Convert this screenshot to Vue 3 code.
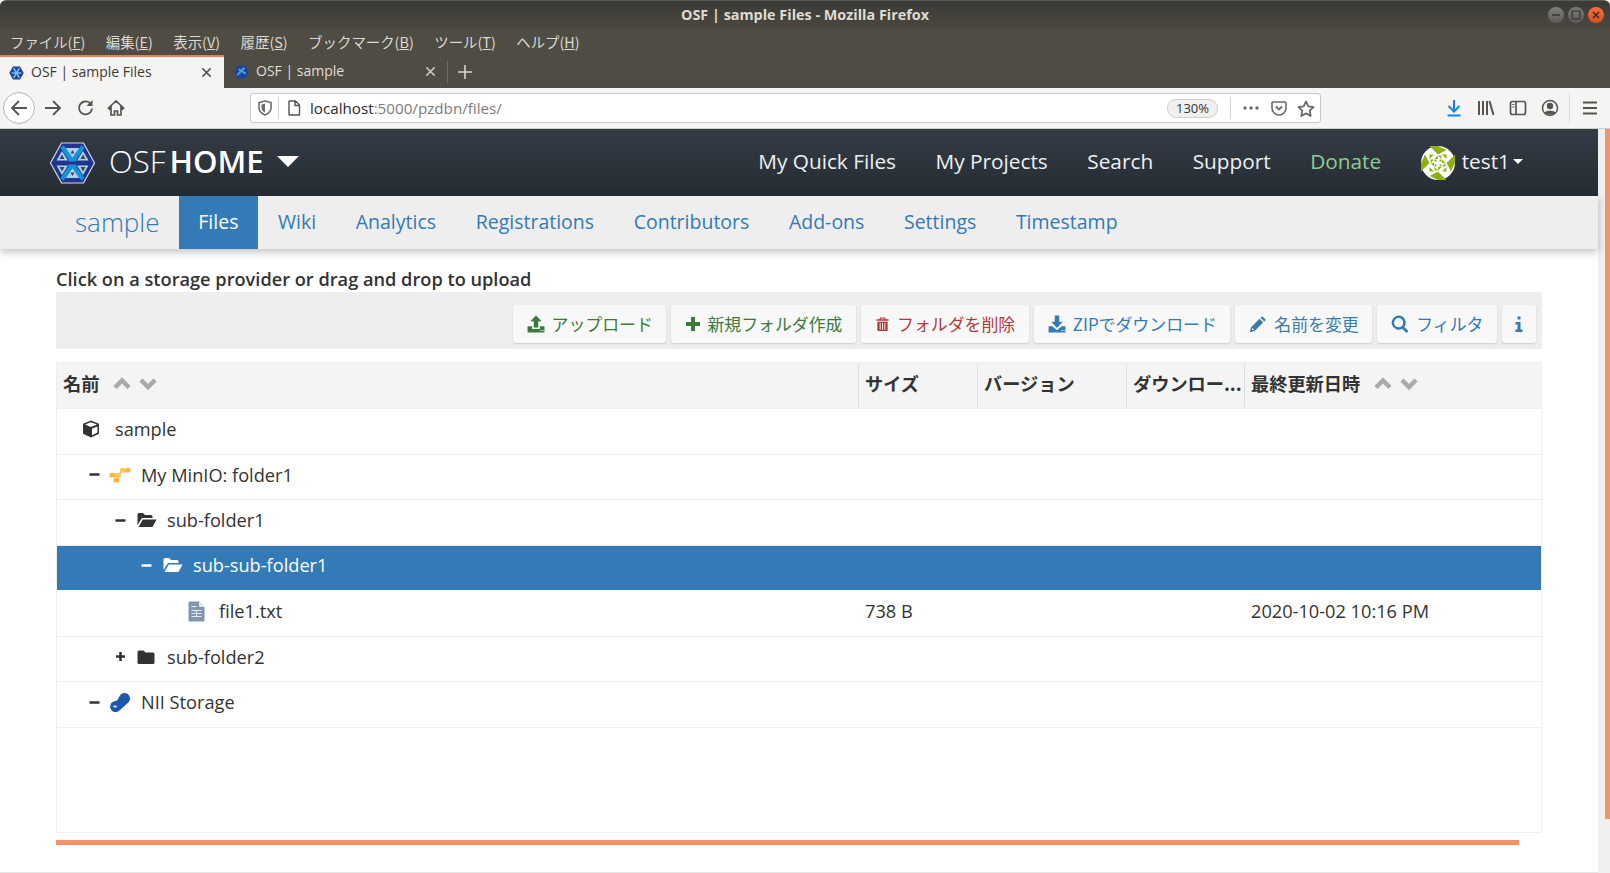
<template>
  <div class="window">
    <div class="titlebar">
      <span class="title">OSF | sample Files - Mozilla Firefox</span>
      <div class="win-buttons">
        <span class="win-btn">
          <svg width="10" height="10" viewBox="0 0 10 10"><path d="M1 5h8" stroke="#35342f" stroke-width="1.4" /></svg>
        </span>
        <span class="win-btn">
          <svg width="10" height="10" viewBox="0 0 10 10"><rect x="1" y="1" width="8" height="8" fill="none" stroke="#35342f" stroke-width="1.2" /></svg>
        </span>
        <span class="win-btn close">
          <svg width="10" height="10" viewBox="0 0 10 10"><path d="M2 2l6 6M8 2l-6 6" stroke="#3c2418" stroke-width="1.4" /></svg>
        </span>
      </div>
    </div>

    <div class="menubar">
      <span v-for="m in menus" :key="m.key" class="menu-item">{{ m.label }}(<u>{{ m.key }}</u>)</span>
    </div>

    <div class="tabbar">
      <div class="tab active">
        <svg class="favicon" viewBox="0 0 46 42"><path d="M12 1h22l11 20-11 20H12L1 21z" fill="#24409a" /><path d="M8 21h30M14 6l18 30M32 6L14 36" stroke="#6fc0ea" stroke-width="5" /></svg>
        <span class="tab-label">OSF | sample Files</span>
        <svg class="tab-close" viewBox="0 0 12 12"><path d="M1.5 1.5l9 9M10.5 1.5l-9 9" stroke="#55544f" stroke-width="1.6" /></svg>
      </div>
      <div class="tab second">
        <svg class="favicon" viewBox="0 0 46 42"><path d="M12 1h22l11 20-11 20H12L1 21z" fill="#24409a" /><path d="M10 30L32 8M14 12l22 14" stroke="#3aa3dd" stroke-width="6" /></svg>
        <span class="tab-label">OSF | sample</span>
        <svg class="tab-close" viewBox="0 0 12 12"><path d="M1.5 1.5l9 9M10.5 1.5l-9 9" stroke="#c9c6bd" stroke-width="1.6" /></svg>
      </div>
      <span class="tab-sep"></span>
      <svg class="tab-new" viewBox="0 0 14 14"><path d="M7 0v14M0 7h14" stroke="#d8d5cc" stroke-width="1.6" /></svg>
    </div>

    <div class="toolbar">
      <span class="back-btn">
        <svg width="18" height="18" viewBox="0 0 18 18"><path d="M2 9h15M9 2L2 9l7 7" fill="none" stroke="#55544f" stroke-width="1.8" /></svg>
      </span>
      <svg class="tool-icon forward" viewBox="0 0 18 18"><path d="M1 9h15M9 2l7 7-7 7" fill="none" stroke="#55544f" stroke-width="1.8" /></svg>
      <svg class="tool-icon reload" viewBox="0 0 18 18"><path d="M15 9.5A6.5 6.5 0 1 1 12.8 4" fill="none" stroke="#55544f" stroke-width="1.8" /><path d="M15.5 1v6h-6z" fill="#55544f" /></svg>
      <svg class="tool-icon home" viewBox="0 0 18 18"><path d="M9 2L1.5 9l1 1L4 8.8V16h3.5v-4h3v4H14V8.8l1.5 1.2 1-1z" fill="none" stroke="#55544f" stroke-width="1.7" /></svg>

      <div class="urlbar">
        <svg class="url-shield" viewBox="0 0 14 16"><path d="M7 1l6 1.6V8c0 3.4-2.6 5.6-6 7-3.4-1.4-6-3.6-6-7V2.6z" fill="none" stroke="#6c6b66" stroke-width="1.6" /><path d="M7 3.5V12.5C5 11.500 3.500 10 3.500 8V4.500z" fill="#6c6b66" /></svg>
        <span class="url-sep"></span>
        <svg class="url-page" viewBox="0 0 14 16"><path d="M2.500 1h6L12.500 5v9.500a.5.5 0 0 1-.5.5H2.500a.5.5 0 0 1-.5-.5v-13A.5.5 0 0 1 2.500 1zM8 1v4.500h4.500" fill="none" stroke="#55544f" stroke-width="1.4" /></svg>
        <span class="url-text">localhost<span class="url-dim">:5000/pzdbn/files/</span></span>
        <span class="zoom-pill">130%</span>
        <span class="url-sep wide"></span>
        <svg class="url-act dots" viewBox="0 0 16 4"><circle cx="2" cy="2" r="1.700" /><circle cx="8" cy="2" r="1.700" /><circle cx="14" cy="2" r="1.700" /></svg>
        <svg class="url-act pocket" viewBox="0 0 16 15"><path d="M1.800 1h12.400a.8.8 0 0 1 .8.8V7a7 7 0 0 1-14 0V1.800A.8.8 0 0 1 1.800 1z" fill="none" stroke="#6c6b66" stroke-width="1.600" /><path d="M4.800 5.500L8 8.500l3.200-3" fill="none" stroke="#6c6b66" stroke-width="1.800" /></svg>
        <svg class="url-act star" viewBox="0 0 18 17"><path d="M9 1.500l2.300 4.900 5.300.7-3.900 3.600 1 5.300L9 13.400l-4.700 2.600 1-5.300L1.400 7.100l5.300-.7z" fill="none" stroke="#6c6b66" stroke-width="1.800" stroke-linejoin="round" /></svg>
      </div>

      <div class="tool-right">
        <svg class="tool-icon" viewBox="0 0 18 18"><path d="M9 1v11M3.500 7L9 12.500 14.500 7M2.500 16.500h13" fill="none" stroke="#0a84ff" stroke-width="2" /></svg>
        <svg class="tool-icon" viewBox="0 0 18 18"><path d="M2 2v14M6 2v14M10 2v14M12.500 2l4 14" fill="none" stroke="#55544f" stroke-width="2" /></svg>
        <svg class="tool-icon" viewBox="0 0 18 18"><rect x="1.500" y="2.500" width="15" height="13" rx="2" fill="none" stroke="#55544f" stroke-width="1.700" /><path d="M7 2.500v13" stroke="#55544f" stroke-width="1.700" /><path d="M3.300 5.500h2M3.300 8h2" stroke="#55544f" stroke-width="1.200" /></svg>
        <svg class="tool-icon" viewBox="0 0 18 18"><circle cx="9" cy="9" r="7.500" fill="none" stroke="#55544f" stroke-width="1.500" /><circle cx="9" cy="7" r="3.200" fill="#55544f" /><path d="M3.600 13.500C5 11 13 11 14.400 13.500 12 16.500 6 16.500 3.600 13.500z" fill="#55544f" /></svg>
        <span class="tool-sep"></span>
        <svg class="tool-icon" viewBox="0 0 18 18"><path d="M2 3.500h14M2 9h14M2 14.500h14" stroke="#55544f" stroke-width="2.200" /></svg>
      </div>
    </div>

    <div class="viewport">
      <div class="page">
        <nav class="navbar">
          <div class="brand">
            <svg class="logo" viewBox="0 0 46 42">
              <path d="M12 1h22l11 20-11 20H12L1 21z" fill="#22348f" stroke="#d3d9e4" stroke-width="1.200" />
              <g v-for="m in ['', 'matrix(1 0 0 -1 0 42)']" :key="m" :transform="m">
                <path d="M16 6h14L23 16zM12.500 9L18.500 18.500H7zM33.500 9L27.500 18.500H39z" fill="#a9d3ec" />
                <path d="M12.500 4.500L23 19.500 33.500 4.500M19 19h8" fill="none" stroke="#1593dc" stroke-width="4" />
                <path d="M12.500 12.500l2.500 4.500h-5zM33.500 12.500l2.500 4.500h-5zM23 8l2 3.500h-4z" fill="#3f444d" />
              </g>
              <path d="M3 21h40" stroke="#22348f" stroke-width="3" />
            </svg>
            <span class="brand-osf">OSF</span>
            <span class="brand-home">HOME</span>
            <span class="brand-caret"></span>
          </div>
          <div class="nav-links">
            <a v-for="l in navLinks" :key="l" class="nav-link">{{ l }}</a>
            <a class="nav-link donate">Donate</a>
            <div class="user">
              <svg class="avatar" viewBox="0 0 34 34">
                <circle cx="17" cy="17" r="17" fill="#fff" />
                <g v-for="r in [0, 90, 180, 270]" :key="r" :transform="`rotate(${r} 17 17)`" fill="#8fb012">
                  <path d="M17 0v8.500L8.500 0zM0 17h8.500L4 8.500zM8.500 8.500h4.500l-4.500 4.500zM17 9.500v3.500h-3.500zM9.500 17v-3.500h3.500zM13.500 13.500h2v2h-2z" />
                </g>
              </svg>
              <span class="user-name">test1</span>
              <span class="user-caret"></span>
            </div>
          </div>
        </nav>

        <div class="subnav">
          <a class="project">sample</a>
          <a v-for="t in subTabs" :key="t" class="sub-tab" :class="{ current: t === 'Files' }">{{ t }}</a>
        </div>

        <div class="content">
          <div class="hint">Click on a storage provider or drag and drop to upload</div>
          <div class="actions">
            <button v-for="b in actions" :key="b.label" class="action" :class="b.tone">
              <svg class="action-icon" :class="b.icon" viewBox="0 0 16 16"><path :d="icons[b.icon]" fill="currentColor" fill-rule="evenodd" /></svg>
              <span>{{ b.label }}</span>
            </button>
            <button class="action info-btn">
              <svg class="action-icon" viewBox="0 0 8 16"><path d="M2.500 0.500h3v3h-3zM0.500 6h5v7.500h2V16h-7v-2.500h2V8.500h-2z" fill="currentColor" /></svg>
            </button>
          </div>

          <div class="grid">
            <div class="grid-head">
              <div class="col col-name">名前
                <svg class="sort" viewBox="0 0 44 16"><path d="M2 12.500l7-7 7 7M28 5l7 7 7-7" fill="none" stroke="#aaa" stroke-width="4.500" /></svg>
              </div>
              <div class="col col-size">サイズ</div>
              <div class="col col-ver">バージョン</div>
              <div class="col col-dl">ダウンロー...</div>
              <div class="col col-date">最終更新日時
                <svg class="sort" viewBox="0 0 44 16"><path d="M2 12.500l7-7 7 7M28 5l7 7 7-7" fill="none" stroke="#aaa" stroke-width="4.500" /></svg>
              </div>
            </div>

            <div v-for="row in rows" :key="row.name" class="row" :class="{ selected: row.selected }">
              <div class="cell-name" :style="{ paddingLeft: row.level * 26 + 'px' }">
                <span class="toggle">
                  <svg v-if="row.toggle" viewBox="0 0 11 11"><path :d="row.toggle === '+' ? 'M5.500 1v9M1 5.500h9' : 'M0.500 5.500h10'" stroke="currentColor" stroke-width="2.500" /></svg>
                </span>
                <span class="row-icon">
                  <svg v-if="row.icon === 'cube'" class="i-cube" viewBox="0 0 18 18">
                    <path d="M9 0.500l8 3.200v10L9 17.500l-8-3.800v-10z" fill="#333" />
                    <path d="M3 4.500L9 7l6-2.500L9 2.300zM10 8.700l5.500-2.300v6.200L10 15.200z" fill="#fff" />
                  </svg>
                  <svg v-else-if="row.icon === 'minio'" class="i-minio" viewBox="0 0 22 16">
                    <path d="M3 8h7M10 7l4-4h5M8 9l-1 4" stroke="#f7b93e" stroke-width="1.200" fill="none" />
                    <rect x="0.500" y="6" width="6" height="4.500" rx="1.500" fill="#f7b93e" />
                    <rect x="6" y="6" width="6" height="4.500" rx="1.500" fill="#fbc85f" />
                    <rect x="11" y="1" width="5.500" height="4.500" rx="1.500" fill="#fbc85f" />
                    <rect x="16" y="1" width="5.500" height="4.500" rx="1.500" fill="#f7b93e" />
                    <rect x="4.500" y="11" width="6" height="4.500" rx="1.500" fill="#f7b93e" />
                  </svg>
                  <svg v-else-if="row.icon === 'open'" class="i-folder" viewBox="0 0 20 16"><path d="M0.500 13V2.500A1.500 1.500 0 0 1 2 1h4l2 2h6a1.500 1.500 0 0 1 1.500 1.500V6H5L0.500 13zM5.800 7.500H19.500L15.500 15H1.500z" fill="currentColor" /></svg>
                  <svg v-else-if="row.icon === 'folder'" class="i-closed" viewBox="0 0 18 16"><path d="M0.500 3a1.500 1.500 0 0 1 1.500-1.500h4.500l2 2H16A1.500 1.500 0 0 1 17.500 5v8.500A1.500 1.500 0 0 1 16 15H2A1.500 1.500 0 0 1 0.500 13.500z" fill="currentColor" /></svg>
                  <svg v-else-if="row.icon === 'file'" class="i-file" viewBox="0 0 17 21">
                    <path d="M1.500 0.500H11L16.500 6v13.500a1 1 0 0 1-1 1h-14a1 1 0 0 1-1-1v-18a1 1 0 0 1 1-1z" fill="#8197ad" />
                    <path d="M11 0.500V6h5.500z" fill="#dfe5eb" />
                    <path d="M3.500 5h5v1h-5zM3.500 9h10v1h-10zM3.500 12h10v1h-10zM3.500 15h10v1h-10zM8 9h1v7H8z" fill="#e6ebf0" />
                  </svg>
                  <svg v-else-if="row.icon === 'nii'" class="i-nii" viewBox="0 0 22 20">
                    <path d="M15.500 1a5.500 5.500 0 0 1 3.500 9.700L11 18a5.500 5.500 0 1 1-7-8.200c2.500-1 3.500-.5 5-2.500 1.800-3.500 3-6.300 6.500-6.300z" fill="#1f57ab" />
                    <ellipse cx="6" cy="14.500" rx="2.200" ry="1" fill="#cfe0f3" />
                  </svg>
                </span>
                <span class="row-name">{{ row.name }}</span>
              </div>
              <div class="cell-size">{{ row.size }}</div>
              <div class="cell-ver"></div>
              <div class="cell-dl"></div>
              <div class="cell-date">{{ row.date }}</div>
            </div>
          </div>
          <div class="progress"></div>
        </div>
      </div>
      <div class="scrollbar"><div class="thumb"></div></div>
    </div>
  </div>
</template>

<script setup>
const menus = [
  { label: 'ファイル', key: 'F' },
  { label: '編集', key: 'E' },
  { label: '表示', key: 'V' },
  { label: '履歴', key: 'S' },
  { label: 'ブックマーク', key: 'B' },
  { label: 'ツール', key: 'T' },
  { label: 'ヘルプ', key: 'H' }
]

const navLinks = ['My Quick Files', 'My Projects', 'Search', 'Support']
const subTabs = ['Files', 'Wiki', 'Analytics', 'Registrations', 'Contributors', 'Add-ons', 'Settings', 'Timestamp']

const icons = {
  upload: 'M8 0.500L13 5.500H10V11H6V5.500H3zM0.500 10H4.500V12.500H11.500V10H15.500V15.500H0.500zM12 13.300h1v1h-1zM13.800 13.300h1v1h-1z',
  plus: 'M6 1H10V6H15V10H10V15H6V10H1V6H6z',
  trash: 'M5.500 1H10.500L11.500 3H14.500V4.500H1.500V3H4.500zM6.500 2.200L6 3H10L9.500 2.200zM2.500 5.500H13.500V14.500A1 1 0 0 1 12.500 15.500H3.500A1 1 0 0 1 2.500 14.500zM5 7V14H6V7zM7.500 7V14H8.500V7zM10 7V14H11V7z',
  download: 'M6 0.500H10V6H13L8 11.500L3 6H6zM0.500 10H3.800L8 13.500L12.200 10H15.500V15.500H0.500zM12 13.300h1v1h-1zM13.800 13.300h1v1h-1z',
  pencil: 'M11.700 1L15 4.300L13.500 5.800L10.200 2.500zM9.300 3.400L12.600 6.700L5 14.300L0.700 15.300L1.700 11zM3 11.500L4.500 13L3 13.500L2.500 13z',
  search: 'M6.800 0.500A6.300 6.300 0 0 1 11.800 10.600L15.500 14.300L13.700 16L10 12.300A6.300 6.300 0 1 1 6.800 0.500zM6.800 2.700A4.100 4.100 0 1 0 6.800 10.900A4.100 4.100 0 0 0 6.800 2.700z'
}

const actions = [
  { label: 'アップロード', icon: 'upload', tone: 'green' },
  { label: '新規フォルダ作成', icon: 'plus', tone: 'green' },
  { label: 'フォルダを削除', icon: 'trash', tone: 'red' },
  { label: 'ZIPでダウンロード', icon: 'download', tone: 'blue' },
  { label: '名前を変更', icon: 'pencil', tone: 'teal' },
  { label: 'フィルタ', icon: 'search', tone: 'blue' }
]

const rows = [
  { level: 0, icon: 'cube', name: 'sample' },
  { level: 1, toggle: '-', icon: 'minio', name: 'My MinIO: folder1' },
  { level: 2, toggle: '-', icon: 'open', name: 'sub-folder1' },
  { level: 3, toggle: '-', icon: 'open', name: 'sub-sub-folder1', selected: true },
  { level: 4, icon: 'file', name: 'file1.txt', size: '738 B', date: '2020-10-02 10:16 PM' },
  { level: 2, toggle: '+', icon: 'folder', name: 'sub-folder2' },
  { level: 1, toggle: '-', icon: 'nii', name: 'NII Storage' }
]
</script>

<style>
html, body {
  margin: 0;
  overflow: hidden;
  background: #fff;
}
</style>

<style scoped>
.window {
  height: 873px;
  display: flex;
  flex-direction: column;
  overflow: hidden;
  font-family: "Open Sans", "Noto Sans CJK JP", sans-serif;
  color: #333;
}

/* firefox chrome */
.titlebar {
  height: 30px;
  flex: none;
  display: flex;
  align-items: center;
  justify-content: center;
  position: relative;
  background: linear-gradient(#3b3a36, #4a4840);
  border-top: 1px solid #5b5a52;
  box-sizing: border-box;
  border-radius: 6px 6px 0 0;
  padding-bottom: 2px;
}
.title {
  font-size: 14.400px;
  font-weight: 700;
  color: #dfdbd2;
  font-family: "Open Sans", sans-serif;
}
.win-buttons {
  position: absolute;
  right: 6px;
  top: 6px;
  display: flex;
  gap: 4px;
}
.win-btn {
  width: 16px;
  height: 16px;
  border-radius: 50%;
  background: linear-gradient(#807e78, #5d5b55);
  display: flex;
  align-items: center;
  justify-content: center;
}
.win-btn.close {
  background: linear-gradient(#f0703f, #d9501e);
}
.menubar {
  height: 25px;
  flex: none;
  box-sizing: border-box;
  background: #4f4c44;
  display: flex;
  align-items: center;
  gap: 20.500px;
  padding: 0 0 3px 10px;
  font-family: "Noto Sans CJK JP", sans-serif;
  font-size: 14.400px;
  font-weight: 400;
  color: #dcd9d0;
}
.tabbar {
  height: 33px;
  flex: none;
  background: #4f4c44;
  display: flex;
  align-items: center;
  font-family: "Open Sans", sans-serif;
  font-size: 14px;
}
.tab {
  width: 224px;
  height: 33px;
  box-sizing: border-box;
  display: flex;
  align-items: center;
  padding-left: 9px;
  color: #e2dfd7;
}
.tab.second {
  padding-left: 10px;
}
.tab.active {
  background: #f5f4f2;
  border-top: 2px solid #ee7d56;
  color: #3c3b37;
}
.favicon {
  width: 15px;
  height: 14px;
  margin-right: 7px;
  flex: none;
}
.tab-label {
  flex: 1;
  padding-bottom: 2px;
}
.tab-close {
  width: 11px;
  height: 11px;
  margin-right: 12px;
}
.tab-sep {
  width: 1px;
  height: 22px;
  background: #6f6c63;
  margin-left: -1px;
}
.tab-new {
  width: 14px;
  height: 14px;
  margin-left: 10px;
}
.toolbar {
  height: 41px;
  flex: none;
  box-sizing: border-box;
  background: #f5f4f2;
  display: flex;
  align-items: center;
  border-bottom: 1px solid #cfcdc8;
  padding-left: 3px;
}
.back-btn {
  width: 32px;
  height: 32px;
  box-sizing: border-box;
  border: 1px solid #b5b4b0;
  border-radius: 50%;
  background: #fff;
  display: flex;
  align-items: center;
  justify-content: center;
  flex: none;
}
.tool-icon {
  width: 18px;
  height: 18px;
  flex: none;
}
.forward {
  margin-left: 9px;
}
.reload {
  margin-left: 15px;
}
.home {
  margin-left: 12px;
}
.urlbar {
  margin-left: 125px;
  width: 1071px;
  height: 30px;
  box-sizing: border-box;
  background: #fff;
  border: 1px solid #c9c8c4;
  border-radius: 3px;
  display: flex;
  align-items: center;
  font-family: "Open Sans", sans-serif;
  font-size: 15.200px;
  flex: none;
}
.url-shield {
  width: 14px;
  height: 16px;
  margin-left: 7px;
}
.url-sep {
  width: 1px;
  height: 22px;
  background: #d5d4d0;
  margin-left: 6px;
}
.url-sep.wide {
  margin-left: 12px;
}
.url-page {
  width: 14px;
  height: 16px;
  margin-left: 8px;
}
.url-text {
  margin-left: 9px;
  flex: 1;
  color: #2b2a28;
}
.url-dim {
  color: #7c7b78;
}
.zoom-pill {
  width: 49px;
  height: 17px;
  border: 1px solid #cfcfcb;
  border-radius: 9px;
  background: #f0f0ee;
  font-size: 13px;
  line-height: 17px;
  text-align: center;
  color: #333;
}
.url-act {
  flex: none;
  fill: #6c6b66;
}
.dots {
  width: 16px;
  height: 4px;
  margin-left: 12px;
}
.pocket {
  width: 16px;
  height: 15px;
  margin-left: 12px;
}
.star {
  width: 18px;
  height: 17px;
  margin-left: 10px;
  margin-right: 5px;
}
.tool-right {
  margin-left: 124px;
  display: flex;
  align-items: center;
  gap: 14px;
}
.tool-sep {
  width: 1px;
  height: 30px;
  background: #dcdbd7;
  margin: 0 -3px 0 -4px;
}

/* page */
.viewport {
  flex: 1;
  display: flex;
  min-height: 0;
}
.page {
  flex: 1;
  min-width: 0;
  border-bottom: 1px solid #e6e6e6;
  background: #fff;
}
.scrollbar {
  width: 12px;
  flex: none;
  background: #f0efed;
  display: flex;
  justify-content: flex-end;
}
.thumb {
  width: 5px;
  height: 690px;
  background: #f4926a;
}
.navbar {
  height: 67px;
  box-sizing: border-box;
  background: linear-gradient(#333b44, #252c34);
  display: flex;
  align-items: center;
  justify-content: space-between;
  padding: 0 75px 3px 49px;
}
.brand {
  display: flex;
  align-items: center;
  color: #fff;
  font-size: 31.200px;
}
.logo {
  width: 47px;
  height: 42px;
  margin: 3px 13px 0 0;
}
.brand-osf {
  font-weight: 300;
  margin-right: 4px;
}
.brand-home {
  font-weight: 600;
}
.brand-caret {
  width: 0;
  height: 0;
  margin-left: 13px;
  border-left: 11px solid transparent;
  border-right: 11px solid transparent;
  border-top: 11px solid #fff;
}
.nav-links {
  display: flex;
  align-items: center;
  gap: 39.500px;
  font-size: 20.800px;
  color: #eee;
}
.nav-link {
  color: #eef0f2;
}
.donate {
  color: #8fcb8f;
}
.user {
  display: flex;
  align-items: center;
}
.avatar {
  width: 34px;
  height: 34px;
  margin-top: 3px;
}
.user-name {
  margin-left: 7px;
  color: #eef0f2;
}
.user-caret {
  width: 0;
  height: 0;
  margin-left: 3px;
  border-left: 5px solid transparent;
  border-right: 5px solid transparent;
  border-top: 5px solid #fff;
}
.subnav {
  height: 53px;
  background: #eee;
  display: flex;
  align-items: stretch;
  padding-left: 75px;
  box-shadow: 0 3px 8px rgba(0, 0, 0, 0.25);
  position: relative;
  font-size: 19.500px;
  color: #337ab7;
}
.project {
  font-size: 26px;
  font-weight: 300;
  color: #337ab7;
  line-height: 53px;
  margin-right: 19px;
}
.sub-tab {
  padding: 0 19.800px;
  line-height: 51px;
}
.sub-tab.current {
  background: #337ab7;
  color: #fff;
}
.content {
  padding: 0 56px;
}
.hint {
  font-size: 18.200px;
  font-weight: 600;
  line-height: 24px;
  padding-top: 18px;
}
.actions {
  height: 57px;
  box-sizing: border-box;
  margin-top: 1px;
  background: #eee;
  display: flex;
  align-items: center;
  justify-content: flex-end;
  gap: 5px;
  padding: 6px 6px 0 0;
}
.action {
  height: 38px;
  padding: 0 13.500px 0 14px;
  box-sizing: border-box;
  display: flex;
  align-items: center;
  gap: 7px;
  background: #f8f8f8;
  border: 0;
  border-radius: 3px;
  box-shadow: 0 1px 2px rgba(0, 0, 0, 0.15);
  font-family: "Noto Sans CJK JP", sans-serif;
  font-size: 16.900px;
  font-weight: 400;
}
.action-icon {
  width: 18px;
  height: 18px;
  flex: none;
}
.action-icon.plus {
  width: 16px;
  height: 16px;
  margin-right: -1px;
}
.action-icon.trash {
  width: 15px;
}
.info-btn .action-icon {
  width: 8px;
  height: 16px;
}
.info-btn {
  color: #337ab7;
  padding: 0 13px;
}
.green { color: #3c7a3c; }
.red { color: #b03a3a; }
.blue { color: #337ab7; }
.teal { color: #3a7ca5; }

.grid {
  margin-top: 13px;
  height: 471px;
  box-sizing: border-box;
  border: 1px solid #eee;
}
.grid-head {
  height: 46px;
  background: #f4f4f4;
  display: grid;
  grid-template-columns: 802px 119px 149px 118px 1fr;
  font-family: "Noto Sans CJK JP", sans-serif;
  font-size: 18.200px;
  font-weight: 700;
  border-bottom: 1px solid #eee;
  box-sizing: border-box;
}
.col {
  display: flex;
  align-items: center;
  padding: 0 0 5px 6px;
  border-right: 1px solid #ddd;
  margin: 1px 0;
  white-space: nowrap;
}
.col-date {
  border-right: 0;
}
.sort {
  width: 44px;
  height: 16px;
  margin-left: 14px;
}
.row {
  height: 45.500px;
  box-sizing: border-box;
  display: grid;
  grid-template-columns: 802px 119px 149px 118px 1fr;
  align-items: center;
  border-bottom: 1px solid #eee;
  font-size: 18.200px;
  padding-bottom: 4px;
}
.row.selected {
  height: 44px;
  margin-bottom: 1.500px;
  padding-bottom: 5px;
  background: #337ab7;
  color: #fff;
  border-bottom: 0;
}
.cell-name {
  display: flex;
  align-items: center;
}
.toggle {
  width: 26px;
  flex: none;
  display: flex;
  padding-left: 6px;
  box-sizing: border-box;
}
.toggle svg {
  width: 11px;
  height: 11px;
}
.row-icon {
  width: 32px;
  flex: none;
  display: flex;
  align-items: center;
}
.i-cube { width: 18px; height: 18px; margin-left: -1px; }
.i-minio { width: 22px; height: 16px; }
.i-folder { width: 20px; height: 16px; margin-left: 2px; }
.i-closed { width: 18px; height: 16px; margin-left: 2px; }
.i-file { width: 17px; height: 21px; margin-left: 1px; }
.i-nii { width: 22px; height: 20px; }
.cell-size {
  padding-left: 6px;
}
.cell-date {
  padding-left: 6px;
}
.progress {
  margin-top: 7px;
  width: 1463px;
  height: 5px;
  background: #f4926a;
}
</style>
